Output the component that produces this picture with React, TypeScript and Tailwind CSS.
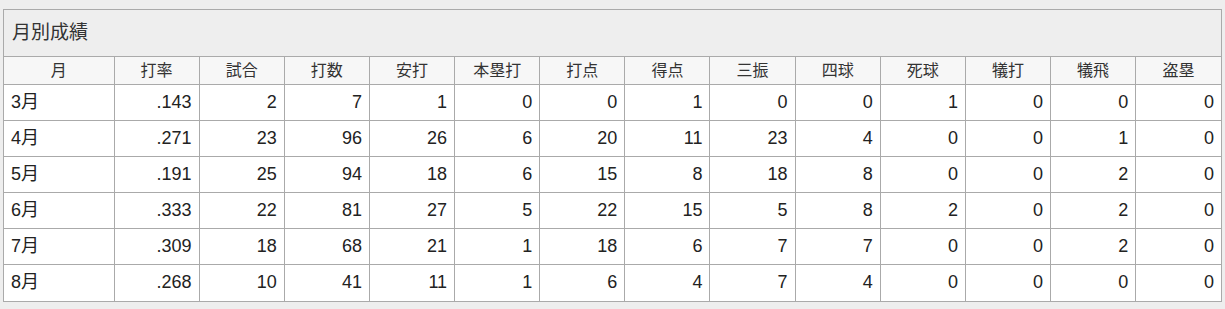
import React from 'react';

const headers = ['月', '打率', '試合', '打数', '安打', '本塁打', '打点', '得点', '三振', '四球', '死球', '犠打', '犠飛', '盗塁'];

const rows: (string | number)[][] = [
  ['3月', '.143', 2, 7, 1, 0, 0, 1, 0, 0, 1, 0, 0, 0],
  ['4月', '.271', 23, 96, 26, 6, 20, 11, 23, 4, 0, 0, 1, 0],
  ['5月', '.191', 25, 94, 18, 6, 15, 8, 18, 8, 0, 0, 2, 0],
  ['6月', '.333', 22, 81, 27, 5, 22, 15, 5, 8, 2, 0, 2, 0],
  ['7月', '.309', 18, 68, 21, 1, 18, 6, 7, 7, 0, 0, 2, 0],
  ['8月', '.268', 10, 41, 11, 1, 6, 4, 7, 4, 0, 0, 0, 0],
];

export default function App() {
  return (
    <div
      className="min-h-[309px] w-[1225px] bg-[#eeeeee] pt-[9px] pl-[3px] text-[#222]"
      style={{ fontFamily: '"Liberation Sans", "Noto Sans CJK JP", sans-serif' }}
    >
      <div className="w-[1219px] border border-[#aaaaaa] bg-white">
        <div className="flex h-[46px] items-center bg-[#eeeeee] pl-[8px] text-[19px] text-[#333]">月別成績</div>
        <table className="w-full table-fixed border-collapse">
          <colgroup>
            <col className="w-[110px]" />
            {headers.slice(1).map((h) => (
              <col key={h} />
            ))}
          </colgroup>
          <thead>
            <tr className="h-[28px] bg-[#f7f7f7]">
              {headers.map((h, i) => (
                <th
                  key={h}
                  className={
                    'border border-[#aaaaaa] p-0 text-center text-[16px] font-normal text-[#333] ' +
                    (i === 0 ? 'border-l-0 ' : '') +
                    (i === headers.length - 1 ? 'border-r-0' : '')
                  }
                >
                  {h}
                </th>
              ))}
            </tr>
          </thead>
          <tbody>
            {rows.map((row, r) => (
              <tr key={r} className="h-[36px]">
                {row.map((cell, i) => (
                  <td
                    key={i}
                    className={
                      'border border-[#aaaaaa] px-[7px] py-0 text-[18px] ' +
                      (i === 0 ? 'border-l-0 text-left ' : 'text-right ') +
                      (i === row.length - 1 ? 'border-r-0 ' : '') +
                      (r === rows.length - 1 ? 'border-b-0' : '')
                    }
                  >
                    {cell}
                  </td>
                ))}
              </tr>
            ))}
          </tbody>
        </table>
      </div>
    </div>
  );
}
